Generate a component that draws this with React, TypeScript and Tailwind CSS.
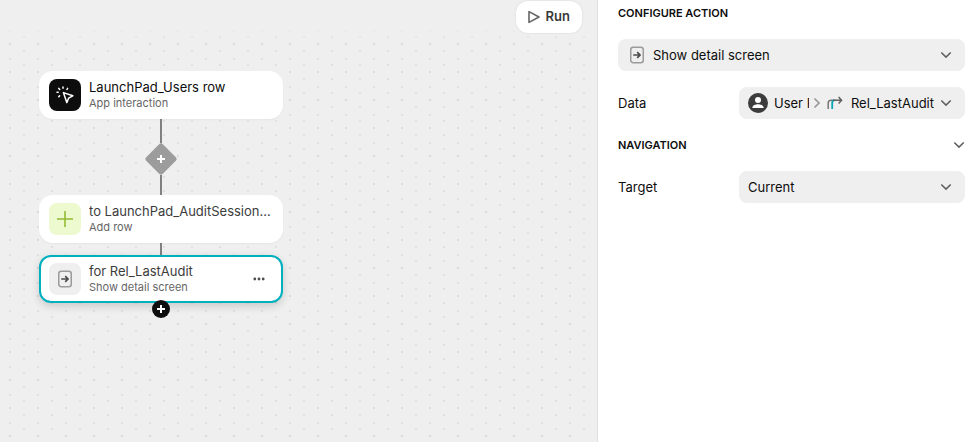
import type { ReactNode } from "react";

type StepProps = {
  icon: ReactNode;
  iconClass: string;
  title: string;
  titleClass?: string;
  subtitle: string;
  selected?: boolean;
  children?: ReactNode;
};

function DetailIcon({ className }: { className?: string }) {
  return (
    <svg viewBox="0 0 16 18" width="16" height="18" fill="none" className={className} aria-hidden="true">
      <rect x="1.75" y="1.25" width="12.5" height="15.5" rx="2.5" stroke="#9b9b9b" strokeWidth="1.5" />
      <path d="M4.2 9h6.6M8.2 6.200l2.800 2.800-2.800 2.800" stroke="#4d4d4d" strokeWidth="1.7" />
    </svg>
  );
}

function ClickIcon() {
  return (
    <svg viewBox="0 0 18 18" width="18" height="18" fill="none" stroke="#fff" strokeWidth="1.5" aria-hidden="true">
      <path d="M7.4 6.6l9.4 3.2-4.2 2.4-1.8 4.4z" strokeLinejoin="round" />
      <path d="M7 1v1.2M11.6 2.4l-.6 1.1M2.8 2.4l.9 1M1 6.300h1.200M3.600 9.900l-.9.9" strokeLinecap="round" />
    </svg>
  );
}

function Chevron({ className }: { className?: string }) {
  return (
    <svg viewBox="0 0 12 8" width="12" height="8" fill="none" className={className} aria-hidden="true">
      <path d="M1.3 1.5L6 6.1l4.7-4.6" stroke="#606060" strokeWidth="1.6" />
    </svg>
  );
}

function PlusIcon() {
  return (
    <svg viewBox="0 0 10 10" width="10" height="10" stroke="#fff" strokeWidth="2" aria-hidden="true">
      <path d="M5 1v8M1 5h8" />
    </svg>
  );
}

function Step({ icon, iconClass, title, titleClass = "text-[#3c3c3c]", subtitle, selected, children }: StepProps) {
  return (
    <div
      className={
        selected
          ? "relative flex h-12 items-center gap-2 rounded-xl border-2 border-[#00b0bf] bg-white px-2 shadow-[0_3px_8px_rgba(0,0,0,0.16)]"
          : "flex h-12 items-center gap-2 rounded-[14px] bg-white px-2.5 shadow-[0_1px_2px_rgba(0,0,0,0.04)]"
      }
    >
      <div className={`flex size-8 shrink-0 items-center justify-center rounded-lg ${iconClass}`}>{icon}</div>
      <div className="min-w-0 flex-1 pb-0.5">
        <div className={`truncate text-[13px] leading-[18px] ${titleClass}`}>{title}</div>
        <div className="text-[11px] leading-[14px] text-[#666]">{subtitle}</div>
      </div>
      {children}
    </div>
  );
}

function Canvas() {
  return (
    <main className="relative min-w-0 flex-1 bg-[#efefef]">
      {/* staggered dot grid, fading out under the toolbar */}
      <div className="absolute inset-0 bg-[linear-gradient(#efefef_24px,transparent_44px),conic-gradient(at_2px_2px,transparent_75%,#dadada_0),conic-gradient(at_2px_2px,transparent_75%,#e0e0e0_0),conic-gradient(at_2px_2px,transparent_75%,#e0e0e0_0)] bg-[size:100%_100%,28px_28px,28px_28px,28px_14px] bg-[position:0_0,9px_15px,9px_2px,23px_8px]" />
      <div className="relative">
        <div className="flex justify-end pt-px pr-[15px]">
          <button
            type="button"
            className="flex h-8 items-center gap-1.5 rounded-xl bg-white px-3 text-[13px] font-semibold text-[#3a3a3a] shadow-[0_0_2px_rgba(0,0,0,0.12)]"
          >
            <svg viewBox="0 0 12 14" width="12" height="14" fill="none" aria-hidden="true">
              <path d="M1 1.6v10.8L11 7z" stroke="#666" strokeWidth="1.6" strokeLinejoin="round" />
            </svg>
            Run
          </button>
        </div>

        <div className="mt-[38px] ml-[39px] w-[244px]">
          <Step
            icon={<ClickIcon />}
            iconClass="bg-[#0d0d0d]"
            title="LaunchPad_Users row"
            titleClass="text-[#0d0d0d]"
            subtitle="App interaction"
          />
          <div className="flex flex-col items-center">
            <div className="h-6 w-0.5 bg-[#808080]" />
            <button type="button" aria-label="Add condition" className="flex size-8 items-center justify-center">
              <svg viewBox="0 0 32 32" width="32" height="32" aria-hidden="true">
                <rect x="4.2" y="4.2" width="23.6" height="23.6" rx="3" fill="#9c9c9c" transform="rotate(45 16 16)" />
                <path d="M16 12v8M12 16h8" stroke="#fff" strokeWidth="2" />
              </svg>
            </button>
            <div className="h-5 w-0.5 bg-[#808080]" />
          </div>
          <Step
            icon={
              <svg viewBox="0 0 16 16" width="16" height="16" stroke="#93bb35" strokeWidth="1.6" aria-hidden="true">
                <path d="M8 0v16M0 8h16" />
              </svg>
            }
            iconClass="bg-[#edf9cf]"
            title="to LaunchPad_AuditSessions row"
            subtitle="Add row"
          />
          <div className="mx-auto h-3 w-0.5 bg-[#808080]" />
          <Step
            icon={<DetailIcon />}
            iconClass="bg-[#efefef]"
            title="for Rel_LastAudit"
            subtitle="Show detail screen"
            selected
          >
            <button type="button" aria-label="More" className="flex h-6 w-7 items-center justify-center">
              <svg viewBox="0 0 12 4" width="12" height="4" fill="#4d4d4d" aria-hidden="true">
                <circle cx="1.8" cy="2" r="1.4" />
                <circle cx="6" cy="2" r="1.4" />
                <circle cx="10.2" cy="2" r="1.4" />
              </svg>
            </button>
            <button
              type="button"
              aria-label="Add step"
              className="absolute -bottom-[17px] left-1/2 flex size-[18px] -translate-x-1/2 items-center justify-center rounded-full bg-[#0d0d0d]"
            >
              <PlusIcon />
            </button>
          </Step>
        </div>
      </div>
    </main>
  );
}

function ConfigPanel() {
  return (
    <aside className="w-[381px] shrink-0 border-l border-[#dfdfdf] bg-white pr-[13px] pl-5 text-[13px] leading-5 text-[#0d0d0d]">
      <h2 className="pt-[5px] text-[11px] leading-4 font-semibold">CONFIGURE ACTION</h2>

      <div className="relative mt-[18px] flex items-center">
        <select
          aria-label="Action"
          className="h-8 w-full appearance-none rounded-lg bg-[#efefef] pr-8 pl-[35px] outline-none"
        >
          <option>Show detail screen</option>
        </select>
        <DetailIcon className="pointer-events-none absolute left-[11px]" />
        <Chevron className="pointer-events-none absolute right-[13px]" />
      </div>

      <div className="mt-4 flex items-center">
        <label htmlFor="data" className="w-[121px]">
          Data
        </label>
        <button
          id="data"
          type="button"
          className="flex h-8 min-w-0 flex-1 items-center rounded-lg bg-[#efefef] pr-[13px] pl-[9px]"
        >
          <svg viewBox="0 0 20 20" width="20" height="20" className="shrink-0" aria-hidden="true">
            <circle cx="10" cy="10" r="10" fill="#3c3c3c" />
            <circle cx="10" cy="7" r="3" fill="#fff" />
            <path d="M4.4 14.6c0-2.3 3.2-3.4 5.6-3.4s5.6 1.1 5.6 3.4v.4H4.4z" fill="#fff" />
          </svg>
          <span className="ml-1.5 min-w-0 flex-1 overflow-hidden text-left whitespace-nowrap">User Profile</span>
          <svg viewBox="0 0 8 12" width="8" height="12" fill="none" className="ml-1 shrink-0" aria-hidden="true">
            <path d="M1.5 1.5L6 6l-4.5 4.5" stroke="#999" strokeWidth="1.7" />
          </svg>
          <svg viewBox="0 0 16 14" width="16" height="14" fill="none" className="ml-1.5 shrink-0" aria-hidden="true">
            <path d="M1.2 13V7Q1.2 4.2 4 4.2H6" stroke="#777" strokeWidth="1.5" />
            <path d="M5.200 13V7Q5.200 4.200 8 4.200" stroke="#0aa5b5" strokeWidth="1.8" />
            <path d="M6 4.200H15M11.600 1l3 3.200-3 3.200" stroke="#606060" strokeWidth="1.5" />
          </svg>
          <span className="mr-1.5 ml-2 shrink-0">Rel_LastAudit</span>
          <Chevron className="shrink-0" />
        </button>
      </div>

      <button
        type="button"
        aria-expanded="true"
        className="mt-[18px] flex w-full items-center justify-between text-[11px] leading-4 font-semibold"
      >
        NAVIGATION
        <Chevron />
      </button>

      <div className="mt-[18px] flex items-center">
        <label htmlFor="target" className="w-[121px]">
          Target
        </label>
        <div className="relative flex flex-1 items-center">
          <select
            id="target"
            className="h-8 w-full appearance-none rounded-lg bg-[#efefef] pr-8 pl-[9px] outline-none"
          >
            <option>Current</option>
          </select>
          <Chevron className="pointer-events-none absolute right-[13px]" />
        </div>
      </div>
    </aside>
  );
}

export default function App() {
  return (
    <div className="flex min-h-screen bg-white font-[Inter,'Liberation_Sans',sans-serif]">
      <Canvas />
      <ConfigPanel />
    </div>
  );
}
